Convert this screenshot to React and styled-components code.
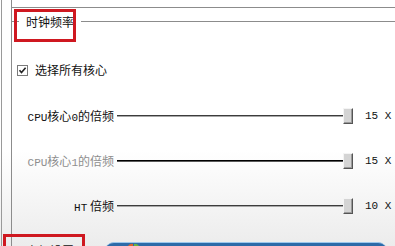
import React from "react";
import styled, { createGlobalStyle } from "styled-components";

const Global = createGlobalStyle`
  html, body { margin: 0; padding: 0; background: #fff; }
  body { font-family: "Noto Sans CJK SC", "Liberation Sans", sans-serif; }
`;

const Page = styled.div`
  position: relative;
  width: 395px;
  height: 246px;
  overflow: hidden;
  padding-left: 1px;
  box-sizing: border-box;
  background: linear-gradient(to bottom, #fff 0, #fff 150px, #f3f3f3 210px, #ececec 246px);
`;

const OuterLine = styled.div`
  height: 100%;
  border-left: 1px solid #9a9a9a;
  padding-left: 9px;
`;

const Frame = styled.div`
  height: 100%;
  border-left: 1px solid #8c8c8c;
  display: flex;
  flex-direction: column;
`;

const TopPanel = styled.div`
  height: 7px;
  border-bottom: 1px solid #8c8c8c;
  flex: none;
`;

const Group = styled.fieldset`
  margin: 6px 0 0 0;
  padding: 34px 0 0 5px;
  border: none;
  border-top: 1px solid #8c8c8c;
  min-width: 0;
`;

const Legend = styled.legend`
  margin-left: 2px;
  padding: 0 7px;
  height: 15px;
  line-height: 15px;
  font-size: 12px;
  color: #111;
`;

const CheckRow = styled.label`
  display: flex;
  align-items: center;
  gap: 7px;
  height: 14px;
  font-size: 12px;
  line-height: 14px;
  color: #111;
`;

const CheckBox = styled.span`
  width: 9px;
  height: 9px;
  border: 1px solid #7a7a7a;
  background: #fff;
  display: flex;
  align-items: center;
  justify-content: center;
`;

const Sliders = styled.div`
  display: grid;
  grid-template-columns: 97px 236px auto;
  grid-auto-rows: 16px;
  column-gap: 3px;
  row-gap: 29px;
  margin-top: 31px;
  align-items: center;
`;

const Label = styled.div`
  height: 16px;
  text-align: right;
  font-size: 12px;
  line-height: 16px;
  white-space: nowrap;
  color: ${(p) => (p.$disabled ? "#8e8e8e" : "#111")};
`;

const Lat = styled.span`
  font-family: "Liberation Mono", monospace;
  font-size: 11px;
  line-height: 1;
`;

const Track = styled.div`
  height: 16px;
  display: flex;
  align-items: center;
`;

const Line = styled.div`
  flex: 1;
  height: 1px;
  background: ${(p) => (p.$dark ? "#000" : "#3c3c3c")};
  border-bottom: 1px solid ${(p) => (p.$dark ? "#5a5a5a" : "#a8a8a8")};
`;

const Thumb = styled.div`
  width: 8px;
  height: 14px;
  background: #d4d4d4;
  border-top: 1px solid #f4f4f4;
  border-left: 1px solid #f4f4f4;
  border-right: 1px solid #555;
  border-bottom: 1px solid #555;
  box-shadow: inset -1px -1px 0 #9a9a9a;
  flex: none;
`;

const Value = styled.div`
  height: 16px;
  margin-left: 9px;
  font-family: "Liberation Mono", monospace;
  font-size: 11px;
  line-height: 16px;
  color: #111;
  white-space: nowrap;
`;

const BottomRow = styled.div`
  margin-top: auto;
  height: 5px;
  display: flex;
  align-items: flex-start;
`;

const Caption = styled.div`
  margin-left: 14px;
  margin-top: 3px;
  font-size: 12px;
  line-height: 14px;
  color: #111;
  white-space: nowrap;
`;

const BlueBar = styled.div`
  margin-left: 31px;
  margin-top: 1px;
  width: 282px;
  height: 12px;
  flex: none;
  border-radius: 9px 9px 0 0;
  background: #2c6aa8;
  border-top: 1px solid #9cc7ec;
  display: flex;
  padding-left: 19px;
  box-sizing: border-box;
`;

const Mark = styled.div`
  position: absolute;
  border: 3px solid #cf1820;
  pointer-events: none;
`;

function Slider({ label, value, dark, disabled }) {
  return (
    <>
      <Label $disabled={disabled}>{label}</Label>
      <Track>
        <Line $dark={dark} />
        <Thumb />
      </Track>
      <Value>{value}</Value>
    </>
  );
}

export default function App() {
  return (
    <Page>
      <Global />
      <OuterLine>
        <Frame>
          <TopPanel />
          <Group>
            <Legend>时钟频率</Legend>
            <CheckRow>
              <CheckBox>
                <svg width="9" height="9" viewBox="0 0 9 9">
                  <path d="M1.5 4.2 L3.5 6.5 L7.6 1.8" stroke="#222" strokeWidth="1.6" fill="none" />
                </svg>
              </CheckBox>
              选择所有核心
            </CheckRow>
            <Sliders>
              <Slider label={<><Lat>CPU</Lat>核心<Lat>0</Lat>的倍频</>} value="15 X" />
              <Slider label={<><Lat>CPU</Lat>核心<Lat>1</Lat>的倍频</>} value="15 X" dark disabled />
              <Slider label={<><Lat>HT</Lat> 倍频</>} value="10 X" />
            </Sliders>
          </Group>
          <BottomRow>
            <Caption>高级设置</Caption>
            <BlueBar>
              <svg width="20" height="6" viewBox="0 0 20 6">
                <path d="M2 6 Q5 0 9 1 L9 6 Z" fill="#e0662a" />
                <path d="M10 1 Q14 0 17 6 L10 6 Z" fill="#6cb33f" />
              </svg>
            </BlueBar>
          </BottomRow>
        </Frame>
      </OuterLine>
      <Mark style={{ left: 14, top: 9, width: 56, height: 27 }} />
      <Mark style={{ left: 3, top: 234, width: 76, height: 20 }} />
    </Page>
  );
}
